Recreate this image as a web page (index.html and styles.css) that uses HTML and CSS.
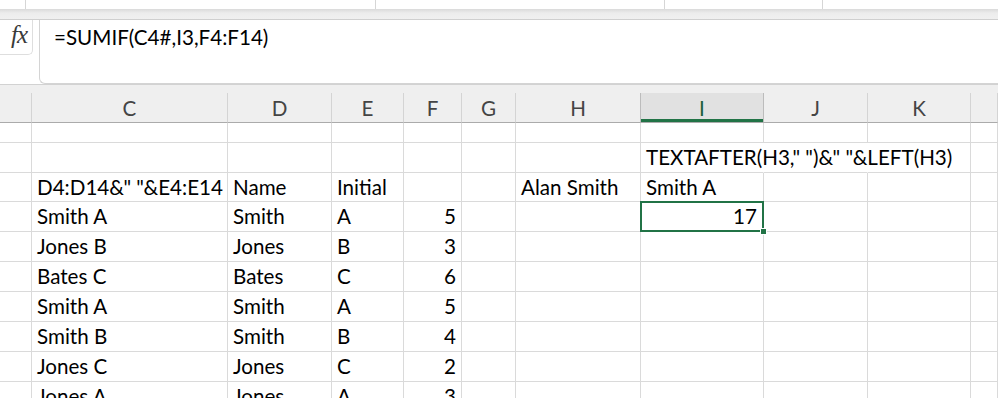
FILE: index.html
```html
<!DOCTYPE html>
<html lang="en">
<head>
    <meta charset="UTF-8">
    <title>Sheet</title>
    <link rel="stylesheet" href="styles.css">
</head>
<body>
    <!-- ribbon edge -->
    <div class="ribbon-edge">
        <div class="seg w25"></div>
        <div class="seg w350"></div>
        <div class="seg w289"></div>
        <div class="seg w158"></div>
    </div>
    <div class="band"></div>

    <!-- formula bar -->
    <div class="formula-bar">
        <div class="fx-box"><span class="fx">fx</span></div>
        <div class="formula-input">=SUMIF(C4#,I3,F4:F14)</div>
    </div>

    <!-- column headers -->
    <div class="col-headers">
        <div class="hcell"></div>
        <div class="hcell">C</div>
        <div class="hcell">D</div>
        <div class="hcell">E</div>
        <div class="hcell">F</div>
        <div class="hcell">G</div>
        <div class="hcell">H</div>
        <div class="hcell active">I</div>
        <div class="hcell">J</div>
        <div class="hcell">K</div>
        <div class="hcell"></div>
    </div>

    <!-- cells -->
    <div class="sheet">
        <div class="row r-short">
            <div class="cell"></div><div class="cell"></div><div class="cell"></div><div class="cell"></div><div class="cell"></div><div class="cell"></div><div class="cell"></div><div class="cell"></div><div class="cell"></div><div class="cell"></div><div class="cell"></div>
        </div>
        <div class="row">
            <div class="cell"></div><div class="cell"></div><div class="cell"></div><div class="cell"></div><div class="cell"></div><div class="cell"></div><div class="cell"></div>
            <div class="cell spill">TEXTAFTER(H3," ")&amp;" "&amp;LEFT(H3)</div><div class="cell spill"></div><div class="cell"></div><div class="cell"></div>
        </div>
        <div class="row r-29">
            <div class="cell"></div><div class="cell">D4:D14&amp;" "&amp;E4:E14</div><div class="cell">Name</div><div class="cell">Initial</div><div class="cell"></div><div class="cell"></div><div class="cell">Alan Smith</div><div class="cell">Smith A</div><div class="cell"></div><div class="cell"></div><div class="cell"></div>
        </div>
        <div class="row">
            <div class="cell"></div><div class="cell">Smith A</div><div class="cell">Smith</div><div class="cell">A</div><div class="cell num">5</div><div class="cell"></div><div class="cell"></div><div class="cell num sel">17</div><div class="cell"></div><div class="cell"></div><div class="cell"></div>
        </div>
        <div class="row">
            <div class="cell"></div><div class="cell">Jones B</div><div class="cell">Jones</div><div class="cell">B</div><div class="cell num">3</div><div class="cell"></div><div class="cell"></div><div class="cell"></div><div class="cell"></div><div class="cell"></div><div class="cell"></div>
        </div>
        <div class="row">
            <div class="cell"></div><div class="cell">Bates C</div><div class="cell">Bates</div><div class="cell">C</div><div class="cell num">6</div><div class="cell"></div><div class="cell"></div><div class="cell"></div><div class="cell"></div><div class="cell"></div><div class="cell"></div>
        </div>
        <div class="row">
            <div class="cell"></div><div class="cell">Smith A</div><div class="cell">Smith</div><div class="cell">A</div><div class="cell num">5</div><div class="cell"></div><div class="cell"></div><div class="cell"></div><div class="cell"></div><div class="cell"></div><div class="cell"></div>
        </div>
        <div class="row">
            <div class="cell"></div><div class="cell">Smith B</div><div class="cell">Smith</div><div class="cell">B</div><div class="cell num">4</div><div class="cell"></div><div class="cell"></div><div class="cell"></div><div class="cell"></div><div class="cell"></div><div class="cell"></div>
        </div>
        <div class="row">
            <div class="cell"></div><div class="cell">Jones C</div><div class="cell">Jones</div><div class="cell">C</div><div class="cell num">2</div><div class="cell"></div><div class="cell"></div><div class="cell"></div><div class="cell"></div><div class="cell"></div><div class="cell"></div>
        </div>
        <div class="row">
            <div class="cell"></div><div class="cell">Jones A</div><div class="cell">Jones</div><div class="cell">A</div><div class="cell num">3</div><div class="cell"></div><div class="cell"></div><div class="cell"></div><div class="cell"></div><div class="cell"></div><div class="cell"></div>
        </div>
    </div>
</body>
</html>
```

FILE: styles.css
```css
body {
    margin: 0;
    background: white;
    font-family: Lato, "Liberation Sans", sans-serif;
    color: #000;
    overflow: hidden;
    height: 398px;
}
.ribbon-edge {
    display: flex;
    height: 9px;
    background: white;
}
.seg {
    border-right: 1px solid #d6d6d6;
    box-sizing: border-box;
}
.w25 { width: 26px; }
.w350 { width: 350px; }
.w289 { width: 289px; }
.w158 { width: 158px; }
.band {
    height: 10px;
    background: linear-gradient(#dadada, #ececec 40%, #f0f0f0);
    border-bottom: 1px solid #cfcfcf;
}
.formula-bar {
    display: flex;
    align-items: flex-start;
    gap: 6px;
    height: 64px;
    background: white;
}
.fx-box {
    width: 33px;
    height: 35px;
    box-sizing: border-box;
    border: 1px solid #dedede;
    border-left: none;
    border-top: none;
    border-radius: 0 0 5px 0;
    display: flex;
    align-items: center;
    justify-content: flex-end;
    padding-right: 5px;
}
.fx {
    font-family: "Liberation Serif", serif;
    font-style: italic;
    font-size: 25px;
    color: #3a3a3a;
    letter-spacing: -1px;
    margin-top: -4px;
}
.formula-input {
    flex: 1;
    height: 64px;
    box-sizing: border-box;
    border: 1px solid #d4d4d4;
    border-top: none;
    border-right: none;
    border-radius: 0 0 0 6px;
    padding: 4px 14px;
    font-size: 20.6px;
    line-height: 26px;
}
.col-headers {
    display: grid;
    grid-template-columns: 32px 196px 104px 72px 58px 54px 125px 123px 104px 103px 1fr;
    background: #efefef;
    border-top: 1px solid #d2d2d2;
    padding-top: 8px;
}
.hcell {
    height: 30px;
    box-sizing: border-box;
    border-right: 1px solid #d4d4d4;
    border-bottom: 1px solid #ababab;
    text-align: center;
    font-size: 20.6px;
    line-height: 30px;
    color: #444;
}
.hcell.active {
    background: #e1e1e1;
    color: #1d5f3a;
    border-left: 1px solid #bcbcbc;
    border-right-color: #bcbcbc;
    margin-left: -1px;
    box-shadow: inset 0 -3px 0 #217346;
}
.row {
    display: grid;
    grid-template-columns: 32px 196px 104px 72px 58px 54px 125px 123px 104px 103px 1fr;
    height: 30px;
}
.row.r-short { height: 20px; }
.row.r-29 { height: 29px; }
.cell {
    box-sizing: border-box;
    border-right: 1px solid #dadada;
    border-bottom: 1px solid #dadada;
    padding: 0 5px;
    font-size: 20.6px;
    line-height: 28px;
    white-space: nowrap;
    overflow: visible;
}
.cell.spill {
    border-right-color: transparent;
}
.num {
    text-align: right;
}
.sel {
    position: relative;
    z-index: 1;
    padding-right: 6px;
}
.sel::after {
    content: '';
    position: absolute;
    left: -1px;
    top: -1px;
    right: -1px;
    bottom: -1px;
    border: 2px solid #217346;
}
.sel::before {
    content: '';
    position: absolute;
    right: -4px;
    bottom: -4px;
    width: 5px;
    height: 5px;
    background: #217346;
    border: 1px solid white;
    z-index: 2;
}
```
